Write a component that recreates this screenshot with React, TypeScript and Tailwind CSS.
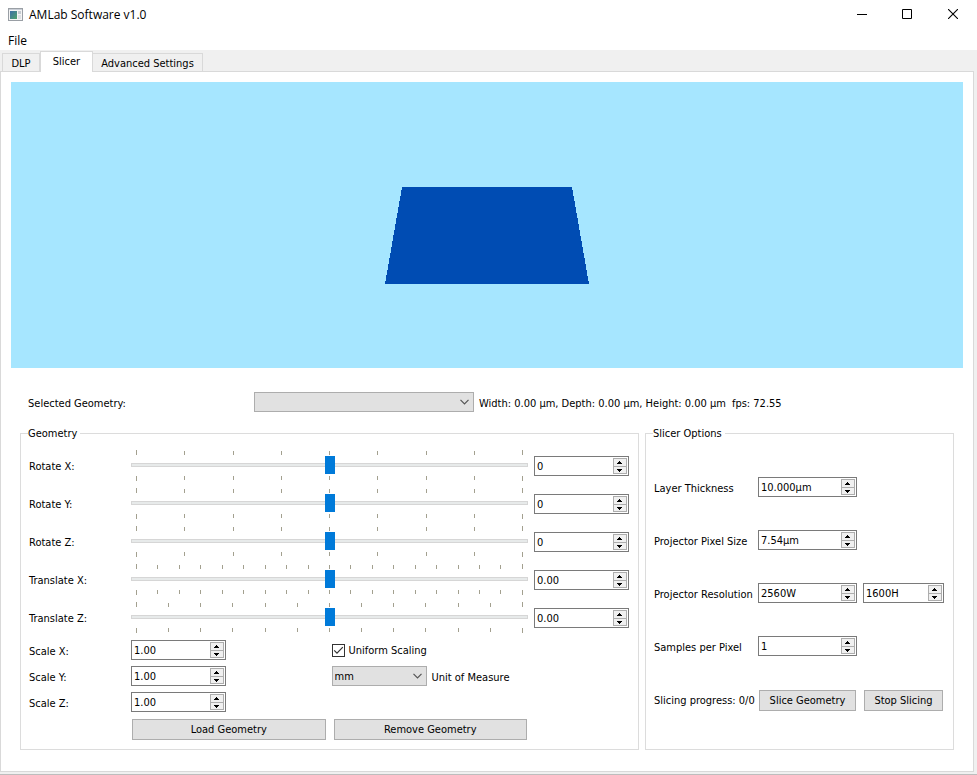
import React, { useState } from "react";

type SpinProps = { id: string; label: string; value: string; className: string };

function SpinBox({ id, label, value, className }: SpinProps) {
  const [text, setText] = useState(value);
  const step = (delta: number) => {
    const match = text.match(/^(-?\d+)(\.\d+)?(.*)$/);
    if (!match) return;
    const digits = match[2] ? match[2].length - 1 : 0;
    setText((parseFloat(match[1] + (match[2] ?? "")) + delta).toFixed(digits) + match[3]);
  };
  return (
    <div className={`flex h-5 shrink-0 border border-[#7a7a7a] bg-white p-px ${className}`}>
      <input
        id={id}
        aria-label={label}
        value={text}
        onChange={(e) => setText(e.target.value)}
        className="min-w-0 flex-1 bg-transparent pt-0.5 pl-px outline-none"
      />
      <div className="flex w-3.5 shrink-0 flex-col border border-[#adadad] bg-[#f0f0f0]">
        <button type="button" aria-label={`Increase ${label}`} onClick={() => step(1)} className="flex h-2 items-center justify-center border-b border-[#adadad]">
          <svg width="6" height="3" viewBox="0 0 6 3" shapeRendering="crispEdges">
            <path d="M2 0h1v1h1v1h1v1H0V2h1V1h1z" />
          </svg>
        </button>
        <button type="button" aria-label={`Decrease ${label}`} onClick={() => step(-1)} className="flex h-1.5 items-center justify-center">
          <svg width="6" height="3" viewBox="0 0 6 3" shapeRendering="crispEdges">
            <path d="M0 0h5v1H4v1H3v1H2V2H1V1H0z" />
          </svg>
        </button>
      </div>
    </div>
  );
}

function Ticks({ count, align }: { count: number; align: string }) {
  return (
    <div className={`flex h-[5px] justify-between px-[5px] ${align}`}>
      {Array.from({ length: count }, (_, i) => (
        <span key={i} className={`w-px bg-[#a3a08f] ${i === 0 || i === count - 1 ? "h-[5px]" : "h-1"}`} />
      ))}
    </div>
  );
}

function SliderRow({ name, ticks, value }: { name: string; ticks: number; value: string }) {
  const id = name.toLowerCase().replace(" ", "-");
  return (
    <div className="flex h-[31px] items-center">
      <label htmlFor={id} className="w-[102px] shrink-0 pt-[3px]">{name}:</label>
      <div className="flex min-w-0 flex-1 flex-col">
        <Ticks count={ticks} align="items-end" />
        <input
          id={id}
          type="range"
          min={-180}
          max={180}
          defaultValue={0}
          className="mt-px mb-0.5 block h-[18px] w-full appearance-none bg-transparent [&::-webkit-slider-runnable-track]:h-1 [&::-webkit-slider-runnable-track]:border [&::-webkit-slider-runnable-track]:border-[#d6d6d6] [&::-webkit-slider-runnable-track]:bg-[#e7eaea] [&::-webkit-slider-thumb]:-mt-2 [&::-webkit-slider-thumb]:h-[18px] [&::-webkit-slider-thumb]:w-2.5 [&::-webkit-slider-thumb]:appearance-none [&::-webkit-slider-thumb]:bg-[#007ad9]"
        />
        <Ticks count={ticks} align="items-start" />
      </div>
      <SpinBox id={`${id}-value`} label={`${name} value`} value={value} className="mt-px ml-1.5 w-[95px]" />
    </div>
  );
}

function Select({ id, label, className, options }: { id: string; label: string; className: string; options: string[] }) {
  return (
    <div className={`grid h-5 shrink-0 items-center ${className}`}>
      <select id={id} aria-label={label} className="col-start-1 row-start-1 h-5 w-full appearance-none border border-[#adadad] bg-[#e1e1e1] pt-0.5 pl-0.5 outline-none">
        {options.map((o) => (
          <option key={o}>{o}</option>
        ))}
      </select>
      <svg className="pointer-events-none col-start-1 row-start-1 mr-[5px] justify-self-end" width="9" height="6" viewBox="0 0 9 6" fill="none" stroke="#555" strokeWidth="1.2">
        <path d="M0.5 0.8L4.5 4.8L8.5 0.8" />
      </svg>
    </div>
  );
}

function PushButton({ children, className }: { children: React.ReactNode; className: string }) {
  return (
    <button type="button" className={`h-[21px] border border-[#adadad] bg-[#e1e1e1] pt-px text-center ${className}`}>
      {children}
    </button>
  );
}

function OptionRow({ id, label, children }: { id: string; label: string; children: React.ReactNode }) {
  return (
    <div className="flex h-5 items-center">
      <label htmlFor={id} className="w-[104px] shrink-0 pt-[3px] whitespace-nowrap">{label}</label>
      {children}
    </div>
  );
}

function TitleBar() {
  return (
    <header className="flex h-[30px] items-center bg-white pr-px pl-2 font-['Open_Sans',sans-serif] text-[12px]">
      <svg width="15" height="13" viewBox="0 0 15 13" className="mr-1.5 mb-0.5">
        <defs>
          <linearGradient id="app" x1="0" y1="0" x2="1" y2="1">
            <stop offset="0" stopColor="#3d6fa8" />
            <stop offset="1" stopColor="#4fa36a" />
          </linearGradient>
        </defs>
        <rect x="0.5" y="0.5" width="14" height="12" fill="#f4f4f4" stroke="#9a9fa5" />
        <rect x="1" y="1" width="13" height="1" fill="#c9ced6" />
        <rect x="2" y="3" width="7" height="8" fill="url(#app)" />
        <rect x="10" y="3" width="3" height="3" fill="#c4cad0" />
        <rect x="10" y="7" width="3" height="4" fill="#dde0e4" />
      </svg>
      <h1 className="flex-1">AMLab Software v1.0</h1>
      <button type="button" aria-label="Minimize" className="flex h-7 w-[45px] items-center justify-center">
        <svg width="10" height="10" viewBox="0 0 10 10" shapeRendering="crispEdges"><path d="M0 4h10v1H0z" /></svg>
      </button>
      <button type="button" aria-label="Maximize" className="flex h-7 w-[46px] items-center justify-center pb-0.5">
        <svg width="10" height="10" viewBox="0 0 10 10" fill="none" stroke="#000"><path d="M.5.5h9v9h-9z" /></svg>
      </button>
      <button type="button" aria-label="Close" className="flex h-7 w-[46px] items-center justify-center pb-0.5">
        <svg width="10" height="10" viewBox="0 0 10 10" fill="none" stroke="#000" strokeWidth="1.1"><path d="M0 0l10 10M10 0L0 10" /></svg>
      </button>
    </header>
  );
}

export default function App() {
  return (
    <div className="flex min-h-screen flex-col border-b border-[#bdbdbd] bg-[#f0f0f0] font-['DejaVu_Sans_Condensed','DejaVu_Sans',sans-serif] text-[11px] leading-[14px] text-black">
      <TitleBar />
      <nav className="flex h-5 items-center bg-white pt-0.5 pl-2 font-['Open_Sans',sans-serif] text-[12px]">
        <button type="button">File</button>
      </nav>

      <div role="tablist" className="flex h-[21px] items-end pl-0.5">
        <button type="button" role="tab" aria-selected="false" className="h-[18px] w-[38px] border border-b-0 border-[#d9d9d9] pt-0.5">DLP</button>
        <button type="button" role="tab" aria-selected="true" className="z-10 -mb-px h-[21px] w-[53px] border border-b-0 border-[#d9d9d9] bg-white">Slicer</button>
        <button type="button" role="tab" aria-selected="false" className="h-[18px] w-[110px] border border-b-0 border-l-0 border-[#d9d9d9] pt-0.5">Advanced Settings</button>
      </div>

      <main role="tabpanel" className="mr-[3px] mb-0.5 flex flex-1 flex-col border border-[#d9d9d9] bg-white px-2.5 pt-2.5 pb-[21px]">
        <div className="flex min-h-[286px] flex-1 bg-[#a6e6ff]">
          <svg className="h-[286px] w-full self-center" viewBox="0 0 952 286" shapeRendering="crispEdges">
            <path d="M391 105H561L578 202H374z" fill="#004cb3" />
          </svg>
        </div>

        <div className="mt-6 flex items-center pl-[17px]">
          <label htmlFor="geometry" className="w-[226px] pt-[3px]">Selected Geometry:</label>
          <Select id="geometry" label="Selected Geometry" className="w-[220px]" options={[""]} />
          <span className="ml-[5px] pt-[3px] whitespace-nowrap">Width: 0.00 µm, Depth: 0.00 µm, Height: 0.00 µm</span>
          <span className="ml-1.5 pt-[3px] whitespace-nowrap">fps: 72.55</span>
        </div>

        <div className="mt-3.5 mr-[9px] ml-[9px] flex gap-1.5">
          <fieldset className="min-w-0 flex-1 border border-[#dcdcdc] pr-[9px] pb-[9px] pl-2">
            <legend className="-ml-px pt-px pr-[3px] leading-[13px]">Geometry</legend>
            <div className="mt-2.5 flex flex-col gap-[7px]">
              <SliderRow name="Rotate X" ticks={9} value="0" />
              <SliderRow name="Rotate Y" ticks={9} value="0" />
              <SliderRow name="Rotate Z" ticks={9} value="0" />
              <SliderRow name="Translate X" ticks={19} value="0.00" />
              <SliderRow name="Translate Z" ticks={13} value="0.00" />
            </div>
            <div className="mt-[7px] mr-[101px] grid grid-cols-[102px_1fr_1fr] items-center gap-y-1.5">
              <label htmlFor="scale-x" className="pt-[3px]">Scale X:</label>
              <SpinBox id="scale-x" label="Scale X" value="1.00" className="w-[95px]" />
              <label className="ml-0.5 flex items-center">
                <input type="checkbox" defaultChecked className="peer sr-only" />
                <span className="flex h-[13px] w-[13px] items-center justify-center border border-[#333] bg-white text-transparent peer-checked:text-[#333]">
                  <svg width="11" height="11" viewBox="0 0 11 11" fill="none" stroke="currentColor" strokeWidth="1.2"><path d="M1.2 5.4L4 8.2L9.8 2.2" /></svg>
                </span>
                <span className="ml-1 pt-px">Uniform Scaling</span>
              </label>
              <label htmlFor="scale-y" className="pt-[3px]">Scale Y:</label>
              <SpinBox id="scale-y" label="Scale Y" value="1.00" className="w-[95px]" />
              <div className="ml-0.5 flex items-center">
                <Select id="unit" label="Unit of Measure" className="w-[95px]" options={["mm", "µm", "cm"]} />
                <label htmlFor="unit" className="ml-[5px] pt-[3px] whitespace-nowrap">Unit of Measure</label>
              </div>
              <label htmlFor="scale-z" className="pt-[3px]">Scale Z:</label>
              <SpinBox id="scale-z" label="Scale Z" value="1.00" className="w-[95px]" />
            </div>
            <div className="mt-[7px] mr-[102px] ml-[103px] grid grid-cols-2 gap-2">
              <PushButton className="">Load Geometry</PushButton>
              <PushButton className="">Remove Geometry</PushButton>
            </div>
          </fieldset>

          <fieldset className="w-[309px] shrink-0 border border-[#dcdcdc] pl-2">
            <legend className="-ml-px pt-px pr-[3px] leading-[13px]">Slicer Options</legend>
            <div className="mt-[37px] flex flex-col gap-[33px]">
              <OptionRow id="thickness" label="Layer Thickness">
                <SpinBox id="thickness" label="Layer Thickness" value="10.000µm" className="w-[99px]" />
              </OptionRow>
              <OptionRow id="pixel-size" label="Projector Pixel Size">
                <SpinBox id="pixel-size" label="Projector Pixel Size" value="7.54µm" className="w-[99px]" />
              </OptionRow>
              <OptionRow id="res-w" label="Projector Resolution">
                <SpinBox id="res-w" label="Resolution width" value="2560W" className="w-[99px]" />
                <SpinBox id="res-h" label="Resolution height" value="1600H" className="ml-1.5 w-[81px]" />
              </OptionRow>
              <OptionRow id="samples" label="Samples per Pixel">
                <SpinBox id="samples" label="Samples per Pixel" value="1" className="w-[99px]" />
              </OptionRow>
              <div className="flex items-center pt-px">
                <output className="w-[105px] shrink-0 pt-px whitespace-nowrap">Slicing progress: 0/0</output>
                <PushButton className="w-[97px]">Slice Geometry</PushButton>
                <PushButton className="ml-2 w-[79px]">Stop Slicing</PushButton>
              </div>
            </div>
          </fieldset>
        </div>
      </main>
    </div>
  );
}
